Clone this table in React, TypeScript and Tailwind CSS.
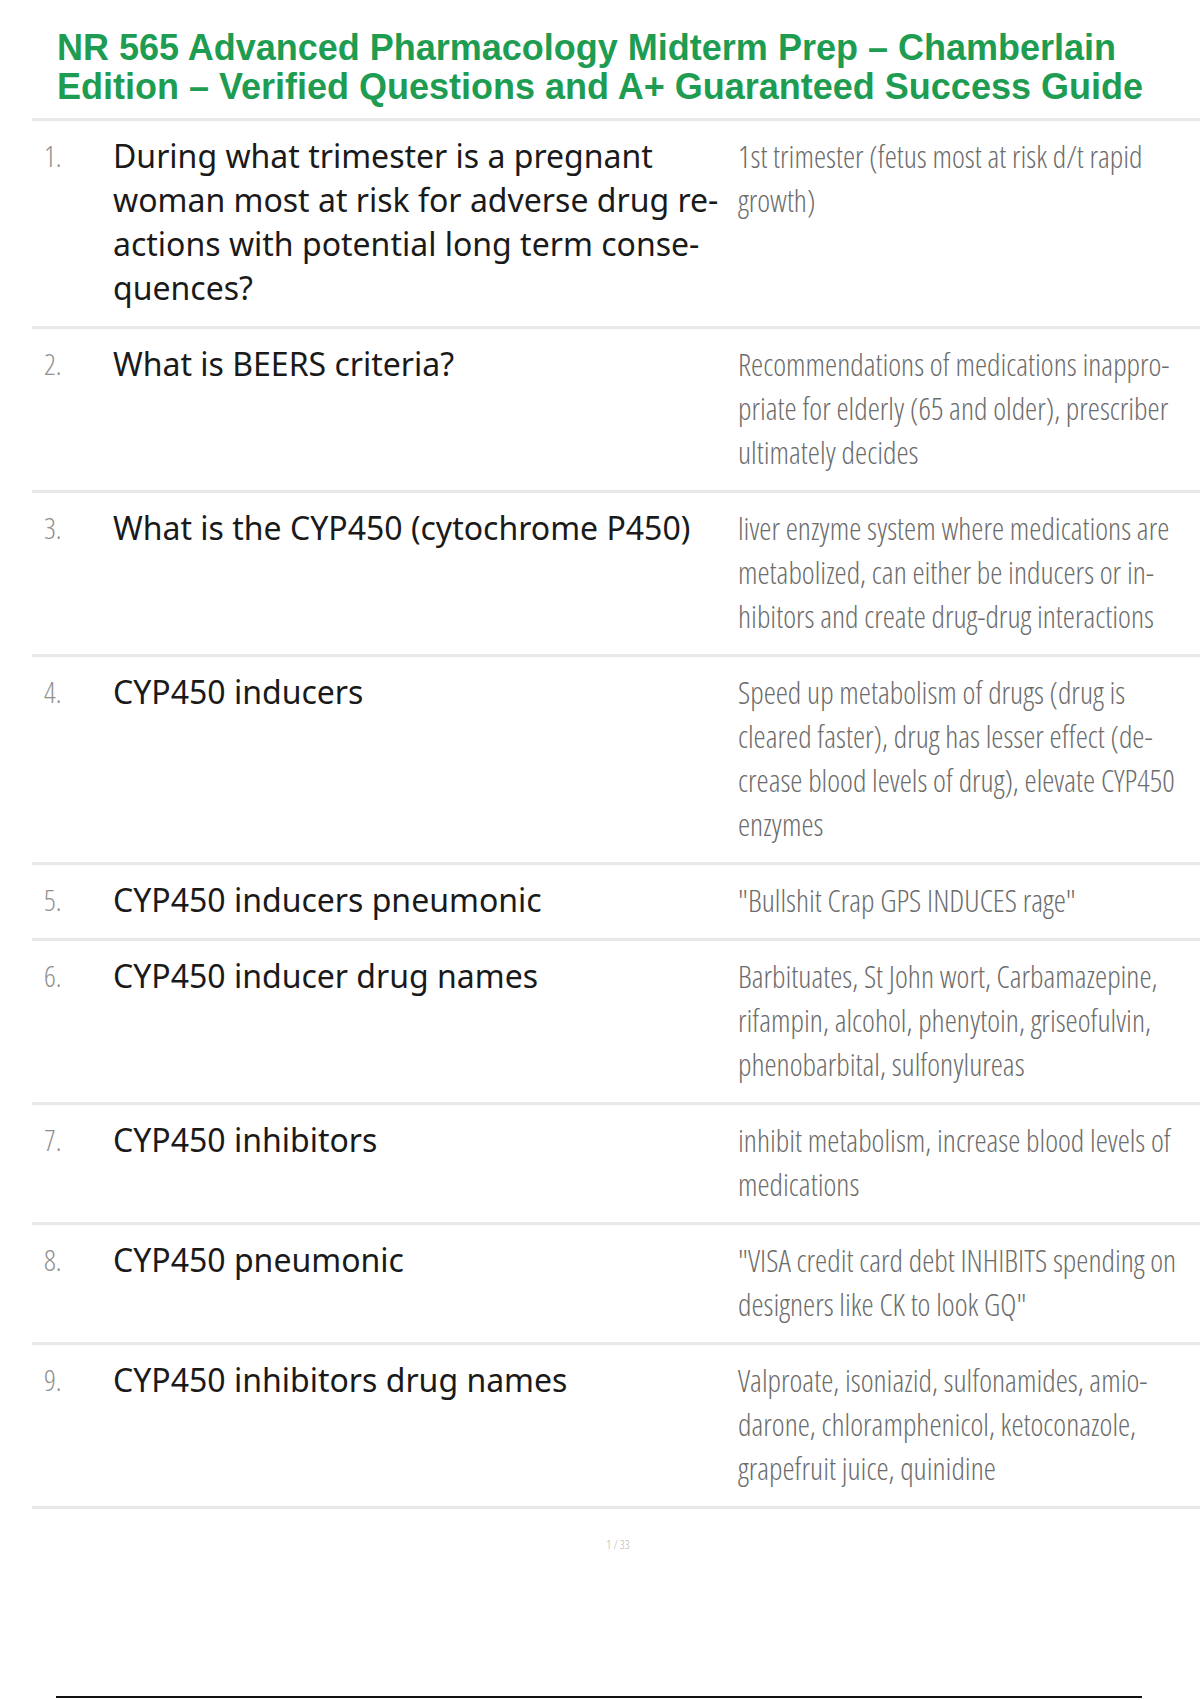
import React from "react";

type Row = { n: string; q: string[]; a: string[] };

const rows: Row[] = [
  {
    n: "1.",
    q: [
      "During what trimester is a pregnant",
      "woman most at risk for adverse drug re-",
      "actions with potential long term conse-",
      "quences?",
    ],
    a: ["1st trimester (fetus most at risk d/t rapid", "growth)"],
  },
  {
    n: "2.",
    q: ["What is BEERS criteria?"],
    a: [
      "Recommendations of medications inappro-",
      "priate for elderly (65 and older), prescriber",
      "ultimately decides",
    ],
  },
  {
    n: "3.",
    q: ["What is the CYP450 (cytochrome P450)"],
    a: [
      "liver enzyme system where medications are",
      "metabolized, can either be inducers or in-",
      "hibitors and create drug-drug interactions",
    ],
  },
  {
    n: "4.",
    q: ["CYP450 inducers"],
    a: [
      "Speed up metabolism of drugs (drug is",
      "cleared faster), drug has lesser effect (de-",
      "crease blood levels of drug), elevate CYP450",
      "enzymes",
    ],
  },
  {
    n: "5.",
    q: ["CYP450 inducers pneumonic"],
    a: ['"Bullshit Crap GPS INDUCES rage"'],
  },
  {
    n: "6.",
    q: ["CYP450 inducer drug names"],
    a: [
      "Barbituates, St John wort, Carbamazepine,",
      "rifampin, alcohol, phenytoin, griseofulvin,",
      "phenobarbital, sulfonylureas",
    ],
  },
  {
    n: "7.",
    q: ["CYP450 inhibitors"],
    a: ["inhibit metabolism, increase blood levels of", "medications"],
  },
  {
    n: "8.",
    q: ["CYP450 pneumonic"],
    a: ['"VISA credit card debt INHIBITS spending on', 'designers like CK to look GQ"'],
  },
  {
    n: "9.",
    q: ["CYP450 inhibitors drug names"],
    a: [
      "Valproate, isoniazid, sulfonamides, amio-",
      "darone, chloramphenicol, ketoconazole,",
      "grapefruit juice, quinidine",
    ],
  },
];

const thin = { fontFamily: '"Open Sans", sans-serif', fontWeight: 300, fontStretch: "75%" } as const;

export default function App() {
  return (
    <div className="w-[1200px] h-[1700px] bg-white overflow-hidden flex flex-col">
      <div className="ml-8 shrink-0 border-b-[3px] border-[#e8e8e8] pt-[28px] pb-[12px] pl-[25px]">
        <h1
          className="text-[36px] leading-[39px] font-bold text-[#1d9c52] whitespace-nowrap"
          style={{ fontFamily: '"Liberation Sans", Arial, sans-serif' }}
        >
          NR 565 Advanced Pharmacology Midterm Prep – Chamberlain
          <br />
          Edition – Verified Questions and A+ Guaranteed Success Guide
        </h1>
      </div>

      {rows.map((r) => (
        <div
          key={r.n}
          className="ml-8 shrink-0 flex border-b-[3px] border-[#e8e8e8] pt-[13px] pb-[16px]"
        >
          <div className="w-[81px] pl-3 text-[29px] leading-[44px] text-[#8f8f8f]" style={thin}>
            {r.n}
          </div>
          <div
            className="w-[625px] text-[32px] leading-[44px] text-[#1a1a1a]"
            style={{ fontFamily: '"Noto Sans", "Open Sans", sans-serif' }}
          >
            {r.q.map((l, i) => (
              <div key={i} className="whitespace-nowrap">
                {l}
              </div>
            ))}
          </div>
          <div className="flex-1 text-[30.7px] leading-[44px] text-[#6c6c6c]" style={thin}>
            {r.a.map((l, i) => (
              <div key={i} className="whitespace-nowrap">
                {l}
              </div>
            ))}
          </div>
        </div>
      ))}

      <div
        className="shrink-0 mt-[29px] text-center text-[12px] leading-[14px] text-[#b5b5b5] pl-[36px]"
        style={thin}
      >
        1 / 33
      </div>
      <div className="shrink-0 mt-[144px] ml-[56px] w-[1086px] h-[2px] bg-[#111]" />
    </div>
  );
}
